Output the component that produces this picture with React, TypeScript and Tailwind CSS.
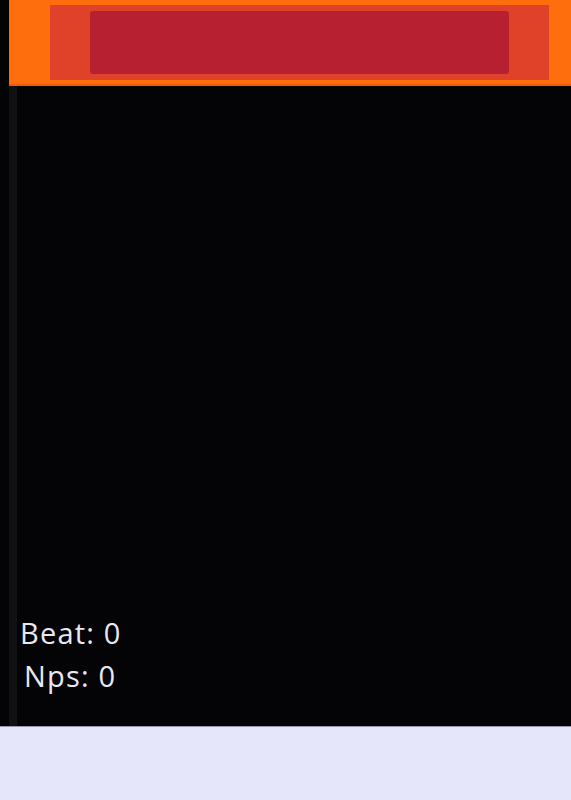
export default function App() {
  return (
    <div className="min-h-[800px] w-[571px] bg-[#e6e6fa]" style={{ fontFamily: "'Open Sans', 'Noto Sans', sans-serif" }}>
      <div className="flex h-[727px] flex-col bg-[#040305] pl-[9px] border-b border-[#9a98a8]">
        <div className="flex h-[86px] items-start bg-[#ff6e0c] border-b-2 border-[#f25a08] pl-[41px] pt-[5px]">
          <div className="flex h-[75px] w-[499px] items-start justify-center bg-[#e04129] pt-[6px]">
            <div className="h-[63px] w-[419px] rounded-[3px] bg-[#b72030]"></div>
          </div>
        </div>
        <div className="flex flex-1 flex-row">
          <div className="w-[8px] bg-[#111013]"></div>
          <div className="flex flex-1 flex-col justify-end pb-[29px] text-[#e8e8f2]">
            <div className="ml-[3px] text-[29px] tracking-[1.2px] leading-[43px]">Beat: 0</div>
            <div className="ml-[7px] text-[29px] tracking-[1.2px] leading-[43px]">Nps: 0</div>
          </div>
        </div>
      </div>
    </div>
  );
}
